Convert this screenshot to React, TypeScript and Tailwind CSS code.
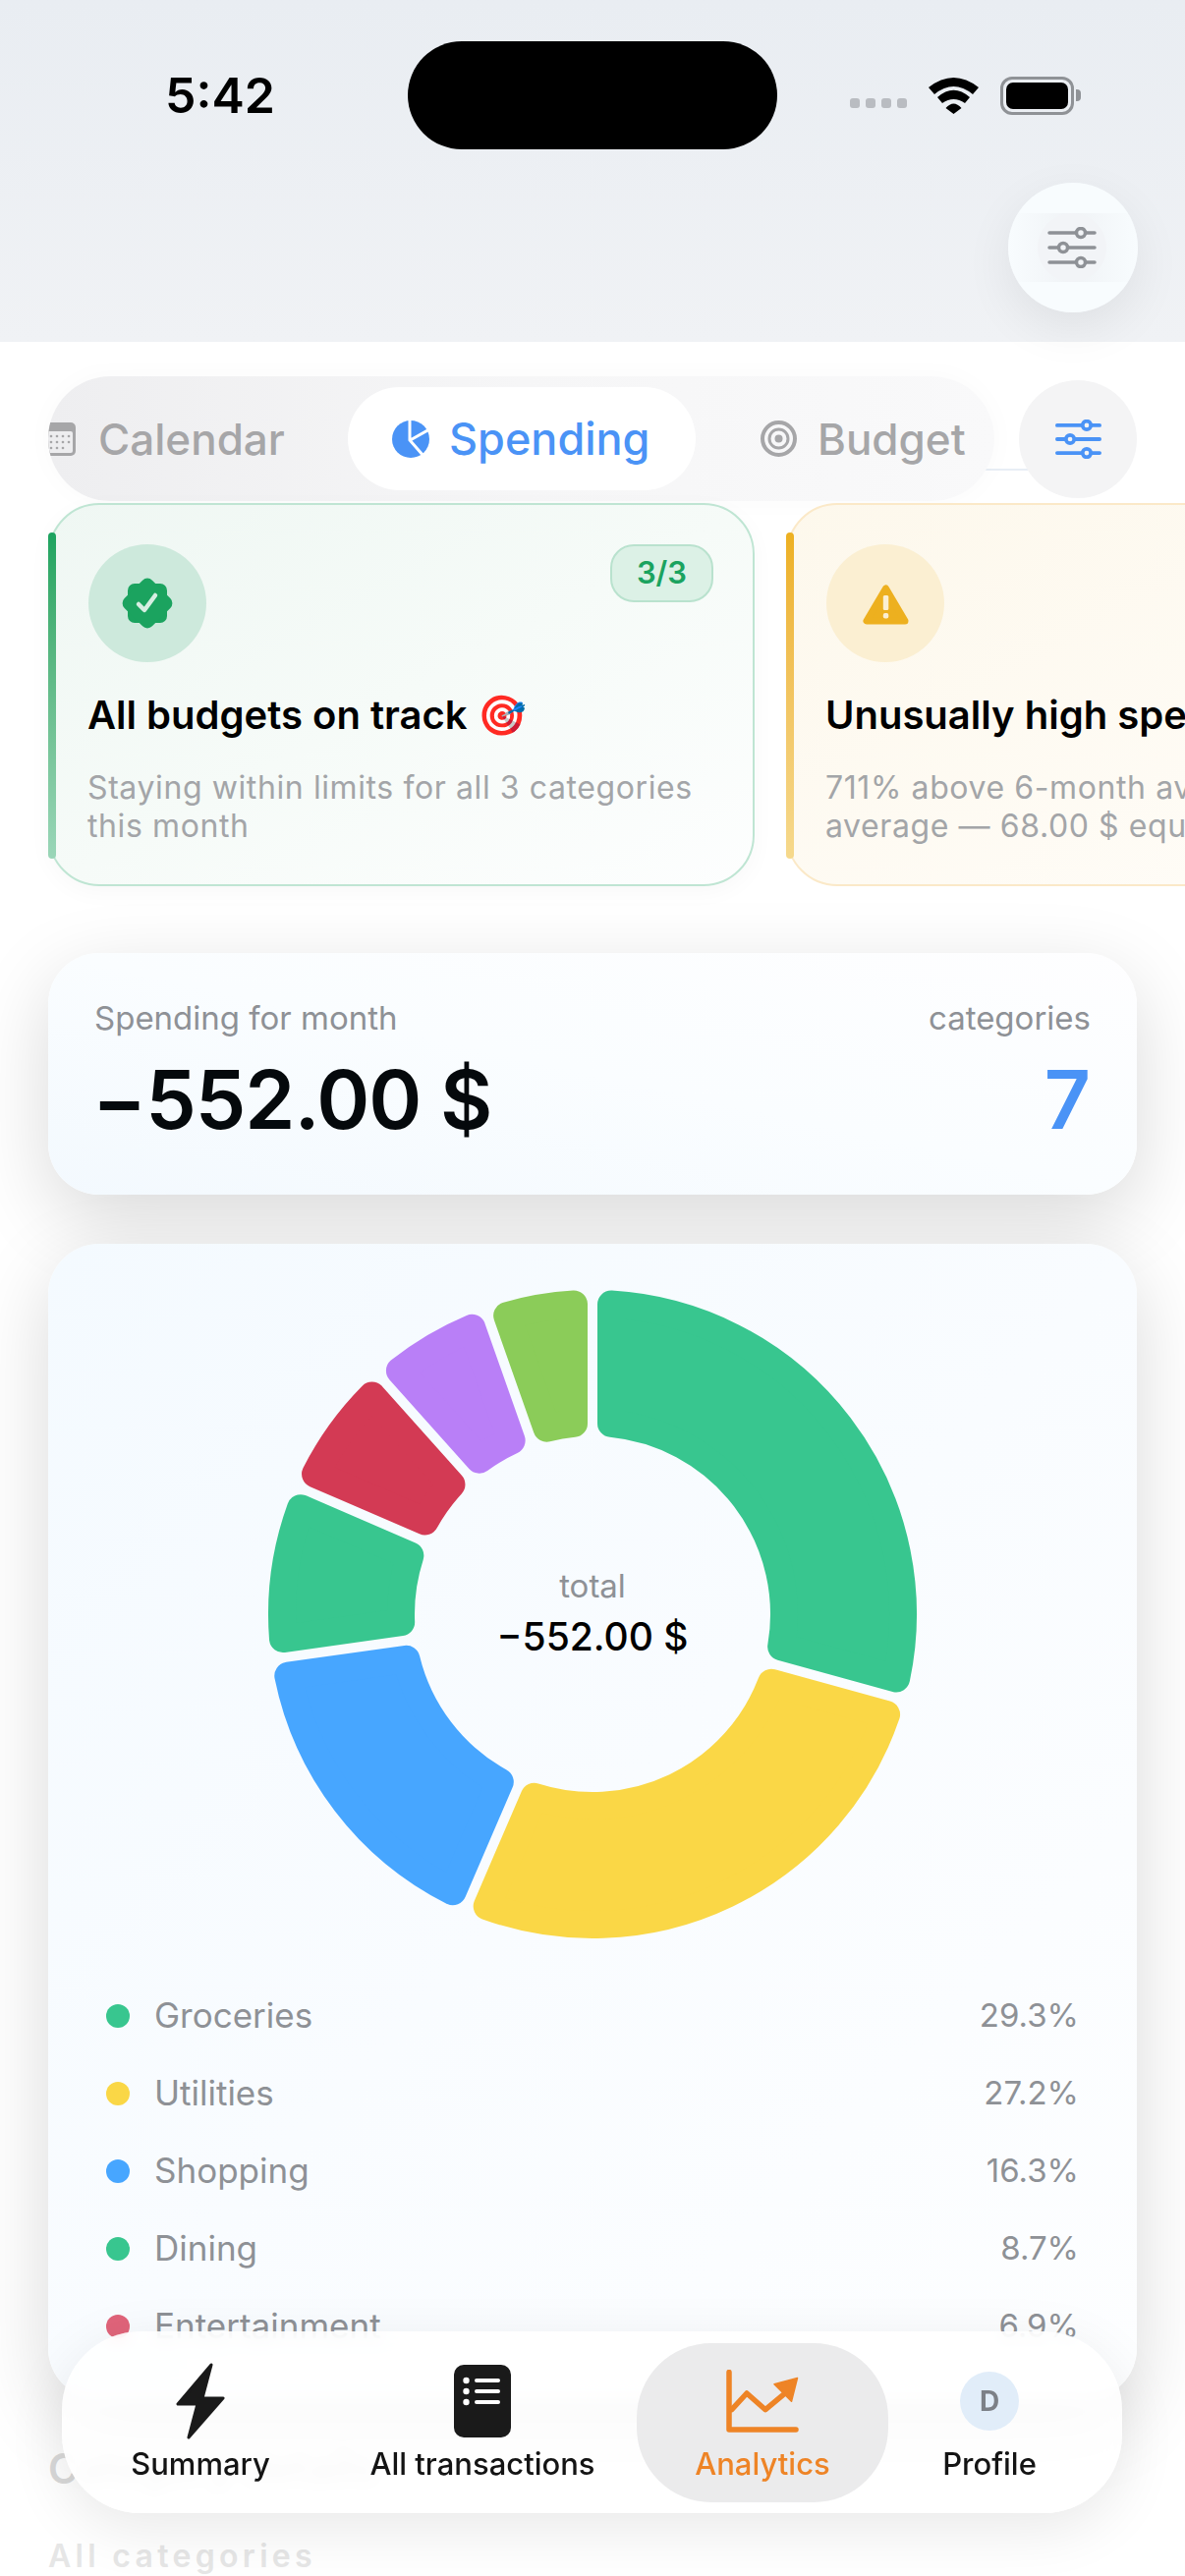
import React from "react";

const F = { fontFamily: "Inter, 'Noto Sans', sans-serif" };
const CX = 333, CY = 333, R = 330, IR = 181, GAP = 5, CR = 14;
const SEG: [number, number, string][] = [
  [0, 105.4, "#38c68f"],
  [105.4, 203.3, "#fad746"],
  [203.3, 262, "#47a6ff"],
  [262, 293.4, "#38c68f"],
  [293.4, 318.2, "#d33a54"],
  [318.2, 340.6, "#b97ff7"],
  [340.6, 360, "#8bcc59"],
];
function pt(rad: number, deg: number) {
  const a = (deg * Math.PI) / 180;
  return `${(CX + rad * Math.sin(a)).toFixed(2)} ${(CY - rad * Math.cos(a)).toFixed(2)}`;
}
function seg(a: number, b: number) {
  const d = GAP + CR;
  const o = R - CR, i = IR + CR;
  const oo = (Math.asin(d / o) * 180) / Math.PI;
  const io = (Math.asin(d / i) * 180) / Math.PI;
  const large = b - a - oo * 2 > 180 ? 1 : 0;
  return `M${pt(o, a + oo)} A${o} ${o} 0 ${large} 1 ${pt(o, b - oo)} L${pt(i, b - io)} A${i} ${i} 0 0 0 ${pt(i, a + io)} Z`;
}
function Sliders({ c, bg, w, h, sw }: { c: string; bg: string; w: number; h: number; sw: number }) {
  return (
    <svg width={w} height={h} viewBox="0 0 50 42" fill="none" stroke={c} strokeWidth={sw} strokeLinecap="round">
      <path d="M2 6h46M2 21h46M2 36h46" />
      <circle cx="34" cy="6" r="4.500" fill={bg} />
      <circle cx="16" cy="21" r="4.500" fill={bg} />
      <circle cx="34" cy="36" r="4.500" fill={bg} />
    </svg>
  );
}
const LEG = [
  ["#38c68f", "Groceries", "29.3%"],
  ["#fad746", "Utilities", "27.2%"],
  ["#47a6ff", "Shopping", "16.3%"],
  ["#38c68f", "Dining", "8.7%"],
  ["#e0647a", "Entertainment", "6.9%"],
];
export default function App() {
  return (
    <div style={F} className="relative w-[1206px] h-[2622px] overflow-hidden bg-white">
      <header className="relative h-[348px] bg-gradient-to-b from-[#e9edf2] to-[#f0f2f5]">
        <div className="flex items-center h-[194px] pl-[168px]">
          <span className="text-[50px] font-semibold text-black w-[247px] leading-none">5:42</span>
          <div className="w-[376px] h-[110px] rounded-full bg-black" />
          <div className="flex items-center ml-[74px]">
            <div className="flex gap-[6px] mt-[16px]">
              {[0, 1, 2, 3].map((i) => <span key={i} className="w-[10px] h-[10px] rounded-[3px] bg-[#b9bcc1]" />)}
            </div>
            <svg className="ml-[22px]" width="51" height="37" viewBox="0 0 51 37"><path fill="#000" d="M0 10Q25.500-10 51 10L45 17Q25.500 1 6 17ZM9 20Q25.500 5.400 42 20L37 26Q25.500 18 14 26ZM17.500 31Q25.500 22 33.500 31L25.500 37Z" /></svg>
            <div className="ml-[22px] w-[75px] h-[39px] rounded-[12px] border-[3px] border-[#8f9296] p-[3px]"><div className="w-full h-full rounded-[7px] bg-black" /></div>
            <span className="w-[5px] h-[12px] rounded-r-[4px] bg-[#8f9296] ml-[2px]" />
          </div>
        </div>
        <div className="absolute left-[1026px] top-[186px] w-[132px] h-[132px] rounded-full shadow-[0_16px_50px_rgba(0,0,0,0.07)]" />
        <div className="absolute left-[1026px] top-[186px] w-[132px] h-[132px] rounded-full bg-[#f8fcfe] overflow-hidden flex items-center justify-center">
          <div className="absolute inset-x-0 top-[31px] h-[70px] bg-gradient-to-r from-transparent via-[#f0f3f6] to-transparent" />
          <div className="relative w-[70px] h-[70px] rounded-full bg-[#f2f4f7] flex items-center justify-center translate-x-[-1px]"><Sliders c="#8e9196" bg="#f2f4f7" w={50} h={42} sw={3.500} /></div>
        </div>
      </header>

      <main className="px-[49px]">
        <div className="relative flex items-start mt-[35px] h-[129px]">
          <span className="absolute left-[950px] top-[94px] w-[50px] h-[2px] bg-[#e8eef5]" />
          <div className="relative w-[964px] h-[127px] rounded-[64px] bg-gradient-to-r from-[#eeeef0] via-[#f6f6f7] to-[#f9f9fa] shadow-[0_0_30px_rgba(0,0,0,0.025)] flex items-center overflow-hidden">
            <div className="flex items-center w-[305px] shrink-0 gap-[23px] text-[#a6a6a8] text-[44px] font-medium">
              <svg width="33" height="34" viewBox="0 0 33 34" className="shrink-0 -ml-[5px]"><rect width="33" height="34" rx="5" fill="#a6a6a8" /><rect x="3" y="9" width="27" height="22" rx="2" fill="#ededef" /><g fill="#a6a6a8"><circle cx="8" cy="14" r="1.300" /><circle cx="14" cy="14" r="1.300" /><circle cx="20" cy="14" r="1.300" /><circle cx="26" cy="14" r="1.300" /><circle cx="8" cy="20" r="1.300" /><circle cx="14" cy="20" r="1.300" /><circle cx="20" cy="20" r="1.300" /><circle cx="26" cy="20" r="1.300" /><circle cx="8" cy="26" r="1.300" /><circle cx="14" cy="26" r="1.300" /><circle cx="20" cy="26" r="1.300" /></g></svg>
              <span>Calendar</span>
            </div>
            <div className="w-[354px] h-[105px] shrink-0 rounded-[53px] bg-white flex items-center pl-[45px] gap-[20px] text-[#4a93f6] text-[45px] font-medium">
              <svg width="38" height="38" viewBox="0 0 38 38"><circle cx="19" cy="19" r="19" fill="#4a93f6" /><path d="M18 -1V20L32 36M18.500 20L38 9" fill="none" stroke="#fff" strokeWidth="3" /></svg>
              <span>Spending</span>
            </div>
            <div className="flex items-center gap-[21px] ml-[66px] text-[#a6a6a8] text-[44px] font-medium">
              <svg width="37" height="37" viewBox="0 0 37 37" fill="none" stroke="#a6a6a8"><circle cx="18.500" cy="18.500" r="16.500" strokeWidth="4" /><circle cx="18.500" cy="18.500" r="9.500" strokeWidth="3" /><circle cx="18.500" cy="18.500" r="4" fill="#a6a6a8" stroke="none" /></svg>
              <span>Budget</span>
            </div>
          </div>
          <div className="relative ml-[25px] mt-[4px] w-[120px] h-[120px] rounded-full bg-[#f4f4f5] flex items-center justify-center"><Sliders c="#4a93f6" bg="#f4f4f5" w={47} h={40} sw={4} /></div>
        </div>

        <div className="flex gap-[32px] w-[1500px]">
          <article className="relative w-[719px] h-[390px] shrink-0 rounded-[52px] border-2 border-[#bfe5d3] bg-gradient-to-br from-[#eff7f3] via-[#f6fbf8] to-[#fdfefe] pl-[38px] pr-[40px] pt-[40px] shadow-[0_6px_24px_rgba(0,0,0,0.03)]">
            <span className="absolute left-[-2px] top-[28px] w-[8px] h-[332px] rounded-full bg-gradient-to-b from-[#1ba35f] to-[#9ad6b8]" />
            <div className="flex items-start justify-between">
              <div className="ml-[1px] w-[120px] h-[120px] rounded-full bg-[#cde9dc] flex items-center justify-center">
                <svg width="52" height="52" viewBox="0 0 52 52"><g fill="#1ba35f"><rect x="6" y="6" width="40" height="40" rx="7" /><rect x="6" y="6" width="40" height="40" rx="7" transform="rotate(45 26 26)" /></g><path d="M17 27l6 6 11-15" fill="none" stroke="#d6eee2" strokeWidth="4.500" strokeLinecap="round" strokeLinejoin="round" /></svg>
              </div>
              <div className="w-[105px] h-[59px] rounded-[24px] border-2 border-[#b9e2ce] bg-[#dcf1e6] text-[#1ba35f] text-[31px] font-semibold flex items-center justify-center">3/3</div>
            </div>
            <h3 className="mt-[30px] text-[40px] leading-[48px] font-semibold text-black whitespace-nowrap">All budgets on track 🎯</h3>
            <p className="mt-[30px] text-[32px] leading-[39px] text-[#a3a5a8] tracking-[0.6px]">Staying within limits for all 3 categories this month</p>
          </article>
          <article className="relative w-[719px] h-[390px] shrink-0 rounded-[52px] border-2 border-[#fbe9c8] bg-gradient-to-br from-[#fdf8ec] to-[#fffdf9] pl-[38px] pr-[40px] pt-[40px]">
            <span className="absolute left-[-2px] top-[28px] w-[8px] h-[332px] rounded-full bg-gradient-to-b from-[#edb01f] to-[#f6d98c]" />
            <div className="ml-[1px] w-[120px] h-[120px] rounded-full bg-[#fbefd2] flex items-center justify-center">
              <svg width="47" height="43" viewBox="0 0 47 43"><path fill="#edb01f" stroke="#edb01f" strokeWidth="7" strokeLinejoin="round" d="M23.500 6L4 39H43Z" /><rect x="20.800" y="13" width="5.500" height="15" rx="1.500" fill="#fbefd2" /><rect x="20.800" y="31" width="5.500" height="5.500" rx="2" fill="#fbefd2" /></svg>
            </div>
            <h3 className="mt-[30px] text-[40px] leading-[48px] font-semibold text-black whitespace-nowrap">Unusually high spending</h3>
            <p className="mt-[30px] text-[32px] leading-[39px] text-[#a3a5a8] tracking-[0.6px] whitespace-nowrap">711% above 6-month avg<br />average — 68.00 $ equivalent</p>
          </article>
        </div>

        <section className="mt-[68px] h-[246px] rounded-[52px] bg-gradient-to-tr from-[#f3f9fe] via-[#fafdff] to-[#fefeff] shadow-[0_24px_80px_rgba(0,0,0,0.15)] px-[47px] pt-[46px] flex justify-between">
          <div>
            <div className="text-[33px] leading-[40px] text-[#8e9196]">Spending for month</div>
            <div className="mt-[14px] -ml-[2px] text-[82px] leading-[100px] font-semibold text-[#05090c] tracking-[-1px]">−552.00 $</div>
          </div>
          <div className="text-right">
            <div className="text-[33px] leading-[40px] text-[#8e9196]">categories</div>
            <div className="mt-[14px] text-[82px] leading-[100px] font-semibold text-[#4a93f6]">7</div>
          </div>
        </section>

        <section className="mt-[50px] rounded-[52px] h-[1176px] overflow-hidden bg-gradient-to-br from-[#f4faff] via-[#f9fcff] to-[#fdfeff] shadow-[0_24px_80px_rgba(0,0,0,0.15)] px-[59px] pt-[44px]">
          <div className="relative w-[666px] h-[666px] mx-auto">
            <svg width="666" height="666" viewBox="0 0 666 666">
              {SEG.map(([a, b, c], i) => (
                <path key={i} d={seg(a, b)} fill={c} stroke={c} strokeWidth={CR * 2} strokeLinejoin="round" />
              ))}
            </svg>
            <div className="absolute inset-0 flex flex-col items-center justify-center">
              <span className="text-[33px] leading-[40px] text-[#8e9196] mt-[-2px]">total</span>
              <span className="text-[39px] leading-[48px] font-medium text-black mt-[8px]">−552.00 $</span>
            </div>
          </div>
          <ul className="mt-[36px] flex flex-col">
            {LEG.map(([c, n, p]) => (
              <li key={n} className="h-[79px] flex items-center text-[35px] text-[#8e9196]">
                <span className="w-[24px] h-[24px] rounded-full mr-[25px]" style={{ backgroundColor: c }} />
                <span className="flex-1">{n}</span>
                <span className="text-[33px]">{p}</span>
              </li>
            ))}
          </ul>
        </section>

        <h2 className="mt-[44px] text-[42px] leading-[54px] font-semibold text-[#d8d8d8] whitespace-nowrap">Category details</h2>
        <p className="mt-[42px] text-[32px] leading-[40px] font-semibold text-[#e6e6e6] tracking-[4.300px]">All categories</p>
      </main>

      <nav className="absolute left-[63px] top-[2373px] w-[1079px] h-[185px] rounded-[80px] bg-white/85 backdrop-blur-sm shadow-[0_16px_60px_rgba(0,0,0,0.09)] flex items-start text-[31px] font-medium text-[#141414] whitespace-nowrap">
        <div className="w-[282px] pt-[32px] flex flex-col items-center">
          <div className="h-[78px] flex items-center">
            <svg width="50" height="78" viewBox="0 0 50 78"><path fill="#1a1a1a" stroke="#1a1a1a" strokeWidth="3" strokeLinejoin="round" d="M36 2L2 42H22L13 76L48 36H27Z" /></svg>
          </div>
          <span className="mt-[6px] leading-[38px]">Summary</span>
        </div>
        <div className="w-[292px] pt-[32px] flex flex-col items-center">
          <div className="h-[78px] flex items-center">
            <svg width="58" height="74" viewBox="0 0 58 74"><rect width="58" height="74" rx="10" fill="#1a1a1a" /><g fill="#fff"><circle cx="12.500" cy="16" r="3.200" /><circle cx="12.500" cy="27" r="3.200" /><circle cx="12.500" cy="38" r="3.200" /><rect x="21" y="14" width="26" height="4" rx="2" /><rect x="21" y="25" width="26" height="4" rx="2" /><rect x="21" y="36" width="26" height="4" rx="2" /></g></svg>
          </div>
          <span className="mt-[6px] leading-[38px]">All transactions</span>
        </div>
        <div className="w-[256px] h-[162px] ml-[11px] mt-[12px] pt-[20px] rounded-[76px] bg-[#ebebec] flex flex-col items-center text-[#ee8426]">
          <div className="h-[78px] flex items-center">
            <svg width="74" height="64" viewBox="0 0 74 64" fill="none" stroke="#ee8426" strokeWidth="5.500" strokeLinecap="round" strokeLinejoin="round"><path d="M3 2.500V61H71" /><path d="M5.700 40.700L21 24L40 40.700L58 25.700" /><path d="M72.500 8.500L49 14.700L66.500 32.300Z" fill="#ee8426" strokeWidth="1.500" /></svg>
          </div>
          <span className="mt-[6px] leading-[38px]">Analytics</span>
        </div>
        <div className="w-[206px] pt-[32px] flex flex-col items-center">
          <div className="h-[78px] flex items-center">
            <div className="w-[60px] h-[60px] rounded-full bg-[#e1edf9] text-[#7c8087] text-[28px] font-bold flex items-center justify-center">D</div>
          </div>
          <span className="mt-[6px] leading-[38px]">Profile</span>
        </div>
      </nav>
    </div>
  );
}
